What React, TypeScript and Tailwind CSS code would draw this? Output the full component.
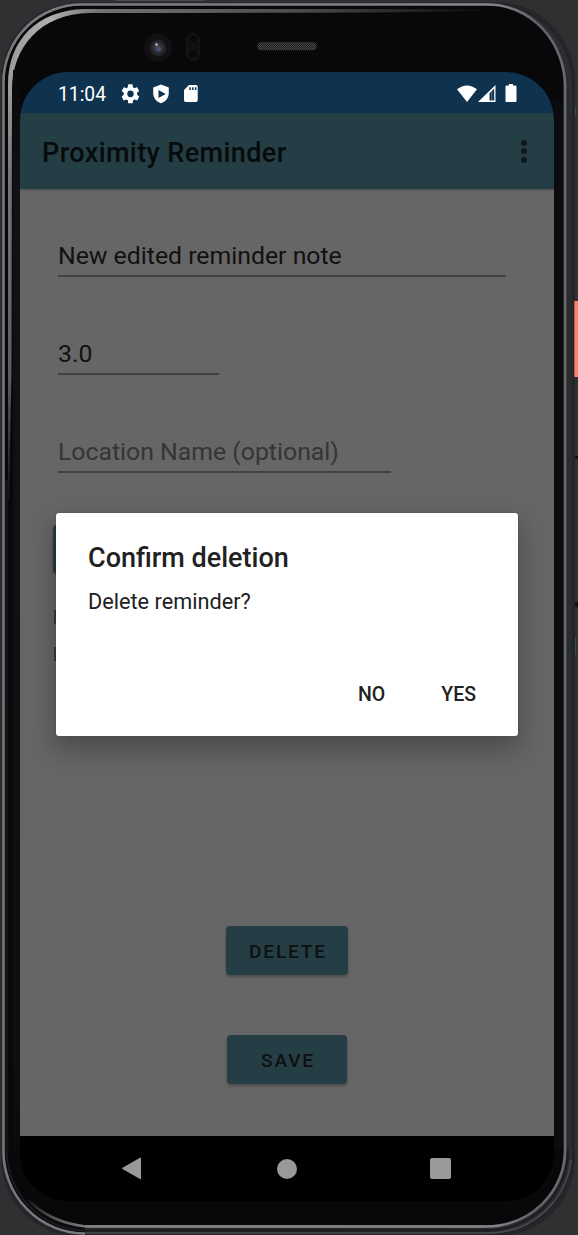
import React from "react";

function PhoneFrame() {
  return (
    <svg className="absolute inset-0" width="578" height="1235" viewBox="0 0 578 1235" aria-hidden="true">
      <defs>
        <linearGradient id="rim" gradientUnits="userSpaceOnUse" x1="0" y1="0" x2="578" y2="0">
          <stop offset="0" stopColor="#77787c" />
          <stop offset="0.85" stopColor="#85878a" />
          <stop offset="0.93" stopColor="#606264" />
          <stop offset="1" stopColor="#707072" />
        </linearGradient>
        <linearGradient id="glint" gradientUnits="userSpaceOnUse" x1="12" y1="0" x2="490" y2="0">
          <stop offset="0" stopColor="#9c9c9c" />
          <stop offset="0.08" stopColor="#b0b0b0" />
          <stop offset="0.18" stopColor="#737373" />
          <stop offset="0.6" stopColor="#4c4c4c" />
          <stop offset="1" stopColor="#08080a" />
        </linearGradient>
        <linearGradient id="side" gradientUnits="userSpaceOnUse" x1="0" y1="90" x2="0" y2="500">
          <stop offset="0" stopColor="#9c9c9c" />
          <stop offset="0.2" stopColor="#767678" />
          <stop offset="0.7" stopColor="#5c5c5e" />
          <stop offset="1" stopColor="#151517" />
        </linearGradient>
        <linearGradient id="edge" gradientUnits="userSpaceOnUse" x1="0" y1="70" x2="0" y2="1170">
          <stop offset="0" stopColor="#08080a" />
          <stop offset="0.1" stopColor="#101015" />
          <stop offset="0.9" stopColor="#110e10" />
          <stop offset="1" stopColor="#08080a" />
        </linearGradient>
        <linearGradient id="chin" gradientUnits="userSpaceOnUse" x1="25" y1="0" x2="90" y2="0">
          <stop offset="0" stopColor="#7e7e80" stopOpacity="0" />
          <stop offset="0.5" stopColor="#5a5a5c" />
          <stop offset="1" stopColor="#7e7e80" />
        </linearGradient>
        <pattern id="mesh" width="2" height="2" patternUnits="userSpaceOnUse">
          <rect width="2" height="2" fill="#191919" />
          <rect width="1" height="1" fill="#505050" />
          <rect x="1" y="1" width="1" height="1" fill="#444444" />
        </pattern>
        <radialGradient id="lens">
          <stop offset="0" stopColor="#525766" />
          <stop offset="0.5" stopColor="#303138" />
          <stop offset="1" stopColor="#1b1b1d" />
        </radialGradient>
      </defs>
      <rect x="115" width="90" height="1" fill="#4b4b4d" />
      <rect x="1" y="2.5" width="574" height="1234" rx="78" fill="#252628" />
      <path d="M490 4A82 82 0 0 1 573 87V1150A82 84 0 0 1 490 1234" fill="#2c2e31" stroke="#202123" />
      <path
        d="M85 1233.5A81.5 82 0 0 1 3.5 1150V82A78 77.5 0 0 1 82 4.5H488A77 82 0 0 1 565 87V1150A79 76 0 0 1 486 1226.5H85"
        fill="#08080a" stroke="url(#rim)" strokeWidth="2.6"
      />
      <path d="M85 1228A75 77 0 0 1 9 1150V86A74 78 0 0 1 83 7.5H480" fill="none" stroke="#0b0b0d" strokeWidth="1.5" />
      <path d="M8 85C8 39 38 10.5 84 9H490V10.5Q440 13 90 13C39 14 13 48 12 88Z" fill="url(#glint)" />
      <path d="M8 85H12L11.5 370L9 500H8Z" fill="url(#side)" />
      <path d="M6.5 480V1150A79 81 0 0 0 86 1230.5H486A82 80 0 0 0 568 1150" fill="none" stroke="#1c1c1e" strokeWidth="2" />
      <path d="M85 1233H490A82 82 0 0 0 571 1160" fill="none" stroke="#4a4b4e" strokeWidth="1.5" />
      <path d="M486 1226.5L84 1226.3Q50 1222 28 1200" fill="none" stroke="url(#chin)" strokeWidth="2.6" />
      <path d="M568 90V1150M571 110V1150" fill="none" stroke="#242628" />
      <rect x="13" y="70" width="7" height="1100" fill="url(#edge)" />
      <rect x="554" y="100" width="9" height="1050" fill="#0c0b0f" />
      <rect x="574" y="301" width="4" height="76" fill="#f9816f" />
      <path d="M574.5 301V377" stroke="#c85d52" />
      <path d="M575 456h3v3h-3zM575 602h3v5h-3z" fill="#111214" />
      <path d="M575.5 107V115M575.5 638V655" stroke="#38504f" />
      <circle cx="158" cy="47.5" r="14" fill="#111113" />
      <circle cx="158" cy="48" r="8.5" fill="url(#lens)" />
      <circle cx="156.5" cy="44.5" r="1.3" fill="#bbbcc2" />
      <circle cx="159" cy="49.5" r="2" fill="#46547d" />
      <rect x="186.5" y="33.5" width="13" height="27" rx="6.5" fill="#0f0f11" stroke="#161618" />
      <circle cx="193" cy="39" r="4.5" fill="#09090b" stroke="#161618" />
      <circle cx="193" cy="54" r="4.5" fill="#09090b" stroke="#161618" />
      <rect x="257.5" y="42.5" width="59" height="7.5" rx="3.7" fill="url(#mesh)" stroke="#343434" strokeWidth=".6" />
    </svg>
  );
}

function StatusBar() {
  return (
    <div className="flex h-[41px] shrink-0 items-center bg-[#0f324f] pt-[5px] pl-[38px] text-white">
      <span className="w-[63px] text-[19.3px] leading-[24px]">11:04</span>
      <svg className="-mt-[3px]" width="19" height="22" viewBox="0 0 19 22">
        <path transform="translate(-1.2 -.6) scale(.89 .95)" fill="white" fillRule="evenodd" d="M19.4 13c0-.3.1-.6.1-1s0-.7-.1-1l2.1-1.6c.2-.2.3-.4.1-.6l-2-3.5c-.1-.2-.4-.3-.6-.2l-2.5 1c-.5-.4-1.1-.7-1.7-1l-.4-2.6c0-.3-.2-.5-.5-.5h-4c-.2 0-.5.2-.5.4L9 5.1c-.6.2-1.1.6-1.7 1l-2.4-1c-.3-.1-.5 0-.6.2l-2 3.5c-.2.2-.1.5.1.6L4.5 11c0 .3-.1.7-.1 1s0 .7.1 1l-2.1 1.6c-.2.2-.3.4-.1.7l2 3.4c.1.2.3.3.6.2l2.5-1c.5.4 1.1.8 1.7 1l.3 2.7c.1.2.3.4.6.4h4c.2 0 .5-.2.5-.4l.4-2.7c.6-.2 1.1-.6 1.6-1l2.5 1c.3.1.5 0 .6-.2l2-3.4c.2-.3.1-.5-.1-.7zM12 15.6a3.6 3.6 0 1 1 0-7.2 3.6 3.6 0 0 1 0 7.2z" />
      </svg>
      <svg className="-mt-[3px] ml-[12px]" width="18" height="20" viewBox="0 0 18 20">
        <path fill="white" fillRule="evenodd" d="M9 .5 16.8 3.5V9c0 5-3.3 8.8-7.8 10.2C4.5 17.8 1.2 14 1.2 9V3.5zM6.5 6v8l7.2-4z" />
      </svg>
      <svg className="-mt-[4px] ml-[13px]" width="16" height="19" viewBox="0 0 16 19">
        <path fill="white" fillRule="evenodd" d="M6 1h7q1.7 0 1.7 1.7v13.6q0 1.7-1.7 1.7H2.7Q1 18 1 16.3V6zM6.3 3.3v2.7h1.5v-2.7zm2.8 0v2.7h1.5v-2.7zm2.8 0v2.7h1.5v-2.7z" />
      </svg>
      <svg className="-mt-[3px] ml-auto" width="20" height="18" viewBox="0 0 20 18">
        <path fill="white" d="M0 4.3Q10-3.500 20 4.3L10 17z" />
      </svg>
      <svg className="-mt-[4px]" width="19" height="19" viewBox="0 0 19 19">
        <path fill="white" fillRule="evenodd" d="M18.5 1v17H1zM17.2 4.5 12.5 9.2V16.5h4.7z" />
        <path fill="white" d="M14.2 8.2l1.1-1.1v9.4H14.200z" opacity=".3" />
      </svg>
      <svg className="-mt-[4px] mr-[37px] ml-[9px]" width="12" height="18" viewBox="0 0 12 18">
        <path fill="white" d="M4 0h4v1.5h2.5q1 0 1 1v14.5q0 1-1 1h-9q-1 0-1-1V2.5q0-1 1-1H4z" />
      </svg>
    </div>
  );
}

function Toolbar() {
  return (
    <header className="z-10 flex h-[76px] shrink-0 items-center justify-between bg-[#253e45] pr-[27px] pl-[22px] shadow-[0_1px_2px_#00000044]">
      <h1 className="pt-[3px] text-[27px] leading-8 font-medium tracking-[0.4px] whitespace-nowrap text-[#060b0c]">Proximity Reminder</h1>
      <button aria-label="More options" className="flex flex-col items-center gap-[2.5px]">
        <span className="size-[6px] rounded-full bg-[#0e191c]" />
        <span className="size-[6px] rounded-full bg-[#0e191c]" />
        <span className="size-[6px] rounded-full bg-[#0e191c]" />
      </button>
    </header>
  );
}

function Dialog() {
  return (
    <section role="dialog" className="absolute top-[441px] left-[35.5px] flex h-[222.5px] w-[462.5px] flex-col rounded-[3px] bg-white pt-[29px] pl-[32.5px] text-[#212121] shadow-[0_12px_26px_3px_#00000040,0_0_2px_#0003]">
      <h2 className="text-[27px] leading-8 font-medium">Confirm deletion</h2>
      <p className="mt-[14px] text-[21.7px] leading-7">Delete reminder?</p>
      <div className="mt-auto mr-[42px] mb-[29px] flex justify-end gap-[56px] text-[19.5px] leading-6 font-medium">
        <button>NO</button>
        <button>YES</button>
      </div>
    </section>
  );
}

export default function App() {
  return (
    <div className="relative flex h-[1235px] w-[578px] overflow-hidden bg-[#2f3032] pt-[72px] pl-[20px] [font-family:Roboto,sans-serif]">
      <PhoneFrame />
      <main className="relative flex h-[1129px] w-[534px] flex-col overflow-hidden rounded-[48px] bg-black">
        <StatusBar />
        <Toolbar />
        <div className="flex h-[947px] shrink-0 flex-col bg-[#666666] pt-[49px] pl-[38px] text-[24.8px] leading-[35px] text-[#111111]">
          <div className="h-[39px] w-[448px] border-b-2 border-[#414141]">New edited reminder note</div>
          <div className="mt-[59px] h-[39px] w-[161px] border-b-2 border-[#414141]">3.0</div>
          <div className="mt-[59px] h-[39px] w-[333px] border-b-2 border-[#414141] text-[#353535]">Location Name (optional)</div>
          <div className="mt-[52px] -ml-[5px] h-[48px] w-[120px] rounded-[4px] bg-[#253e45] shadow-[0_2px_3px_#0003]" />
          <div className="mt-[37px] -ml-[4px] h-[14px] w-[2px] bg-[#3b3b3b]" />
          <div className="mt-[23px] -ml-[4px] h-[14px] w-[2px] bg-[#3b3b3b]" />
          <div className="mt-auto mr-[38px] mb-[52px] flex flex-col items-center gap-[60px] text-[19.2px] font-medium tracking-[1.75px] text-[#0d1011]">
            <button className="h-[49px] w-[122px] rounded-[4px] bg-[#253e45] pt-[2px] pl-[2px] shadow-[0_2px_3px_#0004]">DELETE</button>
            <button className="h-[49px] w-[120px] rounded-[4px] bg-[#253e45] pt-[2px] pl-[2px] shadow-[0_2px_3px_#0004]">SAVE</button>
          </div>
        </div>
        <nav className="flex h-[65px] shrink-0 items-center justify-between bg-black pr-[103px] pl-[101px]">
          <svg width="21" height="23" viewBox="0 0 21 23"><path fill="#999" d="M19 .7q1-.5 1 .5v20.3q0 1-1 .5L1.5 12q-1-.6 0-1.2z" /></svg>
          <span className="ml-[1px] size-[20px] rounded-full bg-[#999999]" />
          <span className="size-[21px] rounded-[2px] bg-[#999999]" />
        </nav>
        <Dialog />
      </main>
    </div>
  );
}
